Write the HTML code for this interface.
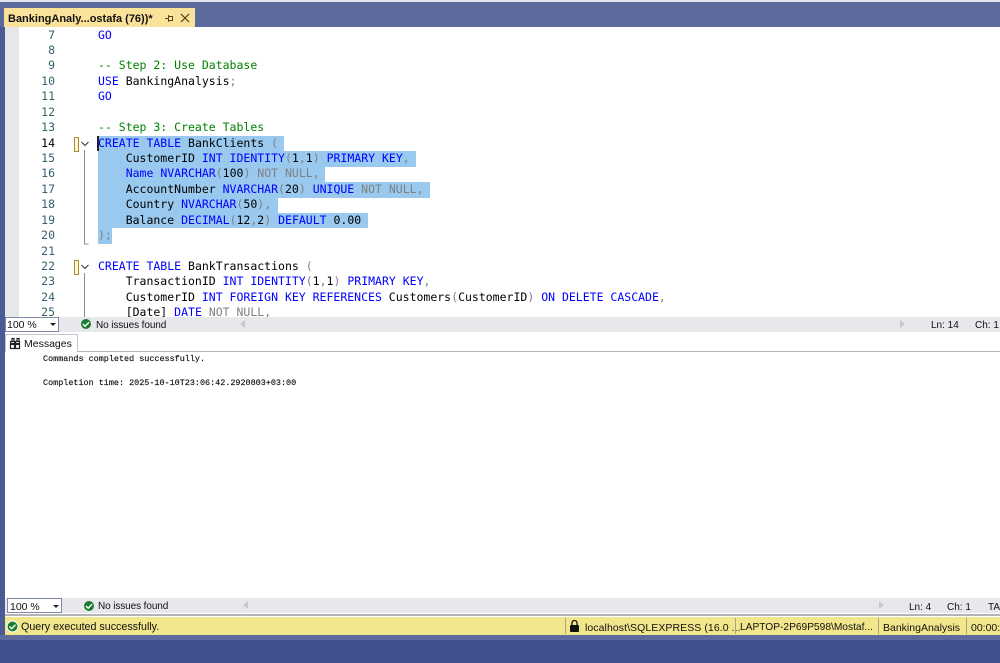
<!DOCTYPE html>
<html><head><meta charset="utf-8"><style>
html,body{margin:0;padding:0;width:1000px;height:663px;overflow:hidden;background:#40508c;font-family:"Liberation Sans",sans-serif}
div,span.a{position:absolute}
.ln{left:19px;width:36px;text-align:right;font:11.5px/15.4px "DejaVu Sans Mono",monospace;color:#35606e}
.c{left:98px;font:11.5px/15.4px "DejaVu Sans Mono",monospace;color:#000;white-space:pre;font-weight:400}
.s{left:98px;height:15.4px;background:#99c9ef}
i{font-style:normal}
.k{color:#0000ff}.g{color:#808080}.t{color:#008000}.m{color:#ff00ff}
.ui{font-size:10.5px;line-height:14px;color:#111;white-space:pre}
</style></head><body>
<div style="left:0;top:0;width:1000px;height:2px;background:#e4e7f2"></div>
<div style="left:0;top:2px;width:1000px;height:25px;background:#5c6b9c"></div>
<div style="left:4px;top:8px;width:191px;height:19px;background:#fbe29a"></div>
<div class="ui" style="left:8px;top:12px;font-size:11px;font-weight:700;color:#111">BankingAnaly...ostafa (76))*</div>
<svg style="position:absolute;left:160px;top:10px" width="36" height="16"><path d="M5 8.500h3M8.500 5v7M8.500 6.500h4v4h-4" stroke="#55451c" fill="none" stroke-width="1"/><path d="M21 4l8 8M29 4l-8 8" stroke="#4b3d18" stroke-width="1.2"/></svg>
<div style="left:5px;top:27px;width:995px;height:290px;background:#fff"></div>
<div style="left:0;top:27px;width:5px;height:609px;background:#4a5a92"></div>
<div style="left:5px;top:27px;width:14px;height:290px;background:#e6e7e8"></div>

<div class="ln" style="top:27.5px">7</div><div class="ln" style="top:43px">8</div><div class="ln" style="top:58.4px">9</div><div class="ln" style="top:73.8px">10</div><div class="ln" style="top:89.3px">11</div><div class="ln" style="top:104.7px">12</div><div class="ln" style="top:120.1px">13</div><div class="ln" style="top:135.5px;color:#000">14</div><div class="ln" style="top:151px">15</div><div class="ln" style="top:166.4px">16</div><div class="ln" style="top:181.8px">17</div><div class="ln" style="top:197.2px">18</div><div class="ln" style="top:212.7px">19</div><div class="ln" style="top:228.1px">20</div><div class="ln" style="top:243.5px">21</div><div class="ln" style="top:258.9px">22</div><div class="ln" style="top:274.4px">23</div><div class="ln" style="top:289.8px">24</div>

<div class="s" style="top:136px;width:186px"></div>
<div class="s" style="top:151.4px;width:318px"></div>
<div class="s" style="top:166.8px;width:227px"></div>
<div class="s" style="top:182.2px;width:332px"></div>
<div class="s" style="top:197.6px;width:180px"></div>
<div class="s" style="top:213px;width:270px"></div>
<div class="s" style="top:228.4px;width:14px"></div>

<div style="left:74px;top:137px;width:3px;height:13px;border:1px solid #b08a2a;background:#fdf6d8"></div>
<div style="left:74px;top:260px;width:3px;height:13px;border:1px solid #b08a2a;background:#fdf6d8"></div>
<svg style="position:absolute;left:78px;top:136px" width="16" height="181"><path d="M3.500 6l3.500 3.500L10.500 6M3.500 129l3.500 3.500 3.500-3.500" stroke="#333" fill="none"/><path d="M6.500 14V108M6.500 137V181M6.500 108h4" stroke="#8a8a8a" fill="none"/></svg>
<div style="left:97px;top:136px;width:2px;height:15px;background:#222"></div>

<div class="c" style="top:27.500px"><i class="k">GO</i></div>
<div class="c t" style="top:58.400px">-- Step 2: Use Database</div>
<div class="c" style="top:73.800px"><i class="k">USE</i> BankingAnalysis<i class="g">;</i></div>
<div class="c" style="top:89.300px"><i class="k">GO</i></div>
<div class="c t" style="top:120.100px">-- Step 3: Create Tables</div>
<div class="c" style="top:135.500px"><i class="k">CREATE TABLE</i> BankClients <i class="g">(</i></div>
<div class="c" style="top:151px">    CustomerID <i class="k">INT IDENTITY</i><i class="g">(</i>1<i class="g">,</i>1<i class="g">)</i> <i class="k">PRIMARY KEY</i><i class="g">,</i></div>
<div class="c" style="top:166.400px">    <i class="k">Name NVARCHAR</i><i class="g">(</i>100<i class="g">) NOT NULL,</i></div>
<div class="c" style="top:181.800px">    AccountNumber <i class="k">NVARCHAR</i><i class="g">(</i>20<i class="g">)</i> <i class="k">UNIQUE</i> <i class="g">NOT NULL,</i></div>
<div class="c" style="top:197.200px">    Country <i class="k">NVARCHAR</i><i class="g">(</i>50<i class="g">),</i></div>
<div class="c" style="top:212.700px">    Balance <i class="k">DECIMAL</i><i class="g">(</i>12<i class="g">,</i>2<i class="g">)</i> <i class="k">DEFAULT</i> 0.00</div>
<div class="c g" style="top:228.100px">);</div>
<div class="c" style="top:258.900px"><i class="k">CREATE TABLE</i> BankTransactions <i class="g">(</i></div>
<div class="c" style="top:274.400px">    TransactionID <i class="k">INT IDENTITY</i><i class="g">(</i>1<i class="g">,</i>1<i class="g">)</i> <i class="k">PRIMARY KEY</i><i class="g">,</i></div>
<div class="c" style="top:289.800px">    CustomerID <i class="k">INT FOREIGN KEY REFERENCES</i> Customers<i class="g">(</i>CustomerID<i class="g">)</i> <i class="k">ON DELETE CASCADE</i><i class="g">,</i></div>
<div class="c" style="top:305.200px">    [Date] <i class="k">DATE</i> <i class="g">NOT NULL,</i></div>
<div class="ln" style="top:305.200px">25</div>

<div style="left:5px;top:317px;width:995px;height:15px;background:#e8e8ec"></div>
<div style="left:5px;top:317px;width:52px;height:13px;background:#fff;border:1px solid #7d88a6"></div>
<div class="ui" style="left:7px;top:318px;font-size:10.500px">100 %</div>
<svg style="position:absolute;left:50px;top:323px" width="8" height="5"><path d="M0 0h6L3 3z" fill="#222"/></svg>
<svg style="position:absolute;left:80px;top:318px" width="12" height="12"><circle cx="6" cy="6" r="5" fill="#1c7c32"/><path d="M3 6l2.200 2.200L9 4.200" stroke="#fff" fill="none" stroke-width="1.400"/></svg>
<div class="ui" style="left:96px;top:319px;font-size:10px;letter-spacing:-.1px">No issues found</div>
<svg style="position:absolute;left:240px;top:320px" width="6" height="9"><path d="M5 0v8L0 4z" fill="#c8c8cc"/></svg>
<svg style="position:absolute;left:900px;top:320px" width="6" height="9"><path d="M0 0v8l5-4z" fill="#c8c8cc"/></svg>
<div class="ui" style="left:931px;top:319px;font-size:10px">Ln: 14</div>
<div class="ui" style="left:975px;top:319px;font-size:10px">Ch: 1</div>

<div style="left:5px;top:332px;width:995px;height:285px;background:#fff"></div>
<div style="left:5px;top:351px;width:995px;height:1px;background:#b4b4b8"></div>
<div style="left:5px;top:334px;width:73px;height:18px;background:#fff;border:1px solid #c4c4c8;border-bottom:none;box-sizing:border-box"></div>
<svg style="position:absolute;left:9px;top:337px" width="12" height="13"><path d="M1.500 4.500h4v7h-4zM6.500 4.500h4v7h-4zM3 4.500V1.500h2v3M8 4.500V1.500h2v3" fill="#fff" stroke="#222" stroke-width="1.200"/><path d="M2 7h3M7 7h3" stroke="#222" stroke-width="2"/></svg>
<div class="ui" style="left:24px;top:337px;font-size:10.500px;color:#111">Messages</div>
<div style="left:43px;top:354px;font:8.450px/10px 'Liberation Mono',monospace;color:#111;white-space:pre;-webkit-text-stroke:.15px #111">Commands completed successfully.</div>
<div style="left:43px;top:378px;font:8.450px/10px 'Liberation Mono',monospace;color:#111;white-space:pre;-webkit-text-stroke:.15px #111">Completion time: 2025-10-10T23:06:42.2920803+03:00</div>

<div style="left:5px;top:598px;width:995px;height:15px;background:#e8e8ec"></div>
<div style="left:7px;top:598px;width:53px;height:13px;background:#fff;border:1px solid #7d88a6"></div>
<div class="ui" style="left:10px;top:600px">100 %</div>
<svg style="position:absolute;left:53px;top:605px" width="8" height="5"><path d="M0 0h6L3 3z" fill="#222"/></svg>
<svg style="position:absolute;left:83px;top:600px" width="12" height="12"><circle cx="6" cy="6" r="5" fill="#1c7c32"/><path d="M3 6l2.200 2.200L9 4.200" stroke="#fff" fill="none" stroke-width="1.400"/></svg>
<div class="ui" style="left:98px;top:600px;font-size:10px;letter-spacing:-.1px">No issues found</div>
<svg style="position:absolute;left:243px;top:601px" width="6" height="9"><path d="M5 0v8L0 4z" fill="#c8c8cc"/></svg>
<svg style="position:absolute;left:879px;top:601px" width="6" height="9"><path d="M0 0v8l5-4z" fill="#c8c8cc"/></svg>
<div class="ui" style="left:909px;top:601px;font-size:10px">Ln: 4</div>
<div class="ui" style="left:947px;top:601px;font-size:10px">Ch: 1</div>
<div class="ui" style="left:988px;top:601px;font-size:10px">TABS</div>
<div style="left:5px;top:614px;width:995px;height:2px;background:#b4b4b8"></div>

<div style="left:5px;top:617px;width:995px;height:18px;background:#f2e68c"></div>
<div style="left:0;top:635px;width:1000px;height:5px;background:#5c6b9c"></div>
<svg style="position:absolute;left:6px;top:620px" width="13" height="13"><circle cx="6.500" cy="6.500" r="6" fill="#fff"/><circle cx="6.500" cy="6.500" r="5" fill="#1c7c32"/><path d="M3.500 6.500l2.200 2.200 3.800-4" stroke="#fff" fill="none" stroke-width="1.400"/></svg>
<div class="ui" style="left:21px;top:620px;font-size:10.700px">Query executed successfully.</div>
<div style="left:565px;top:618px;width:1px;height:16px;background:#a8a37a"></div>
<svg style="position:absolute;left:569px;top:620px" width="11" height="13"><rect x="1" y="5" width="9" height="7" rx="1" fill="#111"/><path d="M3 5V3a2.500 2.500 0 0 1 5 0v2" stroke="#111" fill="none" stroke-width="1.300"/></svg>
<div class="ui" style="left:585px;top:621px;font-size:10.500px;letter-spacing:.07px">localhost\SQLEXPRESS (16.0 ...</div>
<div style="left:735px;top:618px;width:1px;height:16px;background:#a8a37a"></div>
<div class="ui" style="left:740px;top:621px;font-size:10.200px">LAPTOP-2P69P598\Mostaf...</div>
<div style="left:878px;top:618px;width:1px;height:16px;background:#a8a37a"></div>
<div class="ui" style="left:883px;top:621px">BankingAnalysis</div>
<div style="left:966px;top:618px;width:1px;height:16px;background:#a8a37a"></div>
<div class="ui" style="left:971px;top:621px">00:00:00</div>
</body></html>
